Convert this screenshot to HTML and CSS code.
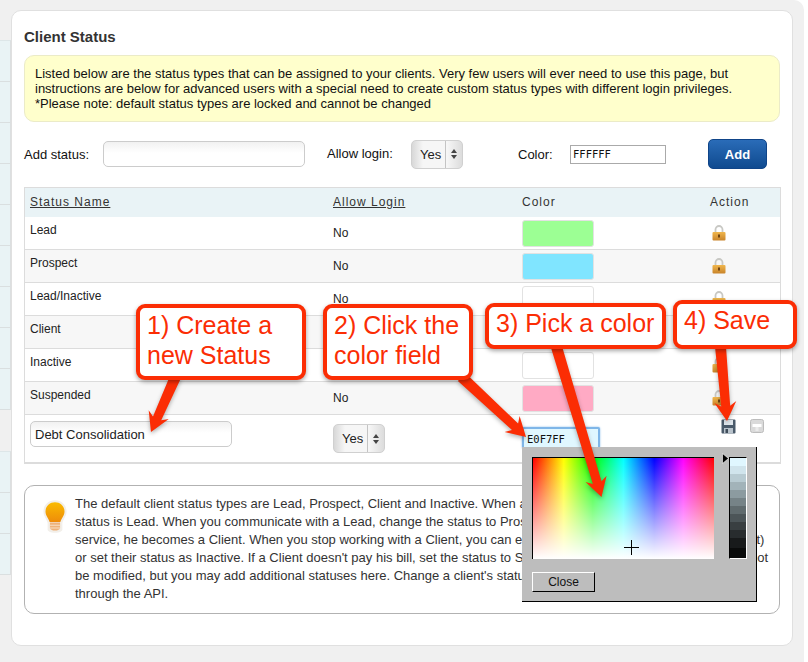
FILE: index.html
```html
<!DOCTYPE html>
<html lang="en">
<head>
<meta charset="utf-8">
<title>Client Status</title>
<link rel="stylesheet" href="styles.css">
</head>
<body>
<div class="shell">
  <aside class="side">
    <div class="side-group">
      <div class="side-row"></div><div class="side-row"></div><div class="side-row"></div>
      <div class="side-row"></div><div class="side-row"></div><div class="side-row"></div>
      <div class="side-row"></div><div class="side-row"></div><div class="side-row"></div>
    </div>
    <div class="side-group side-second">
      <div class="side-row"></div><div class="side-row"></div><div class="side-row"></div>
    </div>
  </aside>

  <main class="panel">
    <h1 class="title">Client Status</h1>
    <div class="note">Listed below are the status types that can be assigned to your clients. Very few users will ever need to use this page, but<br>instructions are below for advanced users with a special need to create custom status types with different login privileges.<br>*Please note: default status types are locked and cannot be changed</div>

    <form class="add-row">
      <label class="lbl lbl-status">Add status:</label>
      <input class="field field-status" type="text">
      <label class="lbl lbl-login">Allow login:</label>
      <div class="sel sel-top"><span class="sel-val">Yes</span><span class="sel-arrows"><i class="up"></i><i class="down"></i></span></div>
      <label class="lbl lbl-color">Color:</label>
      <input class="hex" type="text" value="FFFFFF">
      <button class="add" type="button">Add</button>
    </form>

    <table class="grid">
      <colgroup><col class="c1"><col class="c2"><col class="c3"><col class="c4"></colgroup>
      <thead>
        <tr><th><u>Status Name</u></th><th><u>Allow Login</u></th><th>Color</th><th>Action</th></tr>
      </thead>
      <tbody>
        <tr>
          <td class="name">Lead</td><td class="login">No</td>
          <td class="col"><div class="swatch sw-green"></div></td>
          <td class="act"><svg class="lock" viewBox="0 0 14 16"><use href="#lock"/></svg></td>
        </tr>
        <tr class="alt">
          <td class="name">Prospect</td><td class="login">No</td>
          <td class="col"><div class="swatch sw-blue"></div></td>
          <td class="act"><svg class="lock" viewBox="0 0 14 16"><use href="#lock"/></svg></td>
        </tr>
        <tr>
          <td class="name">Lead/Inactive</td><td class="login">No</td>
          <td class="col"><div class="swatch"></div></td>
          <td class="act"><svg class="lock" viewBox="0 0 14 16"><use href="#lock"/></svg></td>
        </tr>
        <tr class="alt">
          <td class="name">Client</td><td class="login">No</td>
          <td class="col"><div class="swatch"></div></td>
          <td class="act"><svg class="lock" viewBox="0 0 14 16"><use href="#lock"/></svg></td>
        </tr>
        <tr>
          <td class="name">Inactive</td><td class="login">No</td>
          <td class="col"><div class="swatch"></div></td>
          <td class="act"><svg class="lock" viewBox="0 0 14 16"><use href="#lock"/></svg></td>
        </tr>
        <tr class="alt">
          <td class="name">Suspended</td><td class="login">No</td>
          <td class="col"><div class="swatch sw-pink"></div></td>
          <td class="act"><svg class="lock" viewBox="0 0 14 16"><use href="#lock"/></svg></td>
        </tr>
        <tr class="edit">
          <td class="name-edit"><input class="field field-name" type="text" value="Debt Consolidation"></td>
          <td class="login-edit"><div class="sel"><span class="sel-val">Yes</span><span class="sel-arrows"><i class="up"></i><i class="down"></i></span></div></td>
          <td class="col-edit"><input class="hex-edit" type="text" value="E0F7FF"></td>
          <td class="act-edit">
            <svg class="save" viewBox="0 0 15 15">
              <path d="M0.5 1.5a1 1 0 0 1 1-1h12a1 1 0 0 1 1 1v12a1 1 0 0 1-1 1h-12a1 1 0 0 1-1-1z" fill="#4a5a6a"/>
              <rect x="3" y="1" width="9" height="5" fill="#dfe6ec"/>
              <rect x="3" y="9" width="9" height="5.5" fill="#b9c3cc"/>
              <rect x="4.5" y="10" width="2.5" height="4" fill="#3f4d5a"/>
            </svg>
            <svg class="minus" viewBox="0 0 14 14">
              <rect x="0.5" y="0.5" width="13" height="13" rx="2" fill="#dadada" stroke="#bcbcbc"/>
              <rect x="2.5" y="5" width="9" height="3" fill="#fff"/>
              <rect x="5.5" y="8" width="3" height="4" fill="#ebebeb"/>
            </svg>
          </td>
        </tr>
      </tbody>
    </table>

    <section class="help">
      <svg class="bulb" viewBox="0 0 26 36">
        <defs>
          <linearGradient id="bulbfill" x1="0" y1="0" x2="0" y2="1">
            <stop offset="0" stop-color="#fabb00"/><stop offset="1" stop-color="#ee8c0a"/>
          </linearGradient>
        </defs>
        <path d="M13 0.5C5.800 0.500 0.500 5.800 0.500 12.500c0 5 3.500 8 4.500 12.500v7c0 2 3 3.500 8 3.500s8-1.500 8-3.500v-7c1-4.500 4.500-7.500 4.500-12.500C25.500 5.800 20.200 0.500 13 0.500z" fill="#f2efea"/>
        <path d="M13 2.500C7 2.500 2.700 7 2.700 12.500c0 4.500 3.500 7.500 4.500 11.500h11.600c1-4 4.500-7 4.500-11.500C23.300 7 19 2.500 13 2.500z" fill="url(#bulbfill)"/>
        <path d="M7.500 24.500h11v6c0 1.500-2.500 2.800-5.500 2.800s-5.500-1.300-5.500-2.800z" fill="#eeb27a"/>
        <path d="M7.500 27h11v1H7.500zM7.500 30h11v1H7.500z" fill="#f8dfc4"/>
      </svg>
      <p class="help-text">The default client status types are Lead, Prospect, Client and Inactive. When a new client signs up, their default<br>status is Lead. When you communicate with a Lead, change the status to Prospect. When a Prospect pays for a<br>service, he becomes a Client. When you stop working with a Client, you can either delete them (or mark them as a Lost)<br>or set their status as Inactive. If a Client doesn't pay his bill, set the status to Suspended. These default statuses may not<br>be modified, but you may add additional statuses here. Change a client's status on their profile page or<br>through the API.</p>
    </section>
  </main>

  <div class="picker">
    <div class="spectrum"><svg class="cross" viewBox="0 0 15 15"><path d="M7.500 0v15M0 7.500h15" stroke="#000" fill="none"/></svg></div>
    <div class="slider"></div>
    <svg class="pointer" viewBox="0 0 7 11"><path d="M0.500 0.500L6.500 5.500L0.500 10.500z" fill="#000" stroke="#fff" stroke-width="0.600"/></svg>
    <button class="close" type="button">Close</button>
  </div>

  <svg class="arrows" viewBox="0 0 808 662">
    <g transform="translate(151 432) rotate(114)"><polygon points="0,0 -19,-11 -15,-4.500 -62,-5.500 -62,5.500 -15,4.500 -19,11"/></g>
    <g transform="translate(526 437) rotate(43)"><polygon points="0,0 -19,-11 -15,-4.500 -88,-5.500 -88,5.500 -15,4.500 -19,11"/></g>
    <g transform="translate(601.500 497) rotate(73.300)"><polygon points="0,0 -19,-11 -15,-4.500 -158,-5.500 -158,5.500 -15,4.500 -19,11"/></g>
    <g transform="translate(727 421) rotate(85)"><polygon points="0,0 -19,-11 -15,-4.500 -76,-5.500 -76,5.500 -15,4.500 -19,11"/></g>
  </svg>

  <div class="callout call-1">1) Create a<br>new Status</div>
  <div class="callout call-2">2) Click the<br>color field</div>
  <div class="callout call-3">3) Pick a color</div>
  <div class="callout call-4">4) Save</div>
</div>

<svg class="defs" width="0" height="0">
  <defs>
    <linearGradient id="lockfill" x1="0" y1="0" x2="0" y2="1">
      <stop offset="0" stop-color="#f0b64c"/><stop offset="1" stop-color="#c9842a"/>
    </linearGradient>
    <g id="lock">
      <path d="M3.500 7V4.500a3.500 3.500 0 0 1 7 0V7" fill="none" stroke="#c8c8c4" stroke-width="1.800"/>
      <rect x="0.500" y="7" width="13" height="8.500" rx="1" fill="url(#lockfill)"/>
      <rect x="6" y="9.500" width="2" height="3" fill="#6e4312"/>
    </g>
  </defs>
</svg>
</body>
</html>
```

FILE: styles.css
```css
* { box-sizing: border-box; }

html, body {
  margin: 0;
  height: 662px;
  overflow: hidden;
  background: #fff;
}

body {
  font-family: "Liberation Sans", Arial, sans-serif;
  font-size: 12px;
  color: #222;
}

.shell {
  position: relative;
  display: flex;
  align-items: flex-start;
  width: 804px;
  height: 662px;
  padding-top: 10px;
  background: #f0f0f0;
  border-top-right-radius: 10px;
}

/* sidebar slivers */
.side { width: 11px; padding-top: 30px; flex: none; }
.side-group { border-top: 1px solid #dde6e8; border-right: 1px solid #dcdfe0; }
.side-second { margin-top: 41px; }
.side-row { height: 41px; background: #e9f3f5; border-bottom: 1px solid #dadfe0; }

/* main panel */
.panel {
  width: 782px;
  height: 636px;
  padding: 0 12px;
  background: #fff;
  border: 1px solid #e0e0e0;
  border-radius: 10px;
}

.title {
  margin: 18px 0 10px;
  font-size: 15px;
  line-height: 16px;
  font-weight: bold;
  color: #333;
}

.note {
  height: 67px;
  padding: 10px;
  font-size: 13px;
  line-height: 15px;
  white-space: nowrap;
  color: #111;
  background: #ffffcc;
  border: 1px solid #ebebc8;
  border-radius: 10px;
}

/* add form */
.add-row {
  display: flex;
  align-items: center;
  height: 30px;
  margin-top: 17px;
}
.lbl { font-size: 13px; color: #111; white-space: nowrap; }
.lbl-status { width: 79px; }
.lbl-login { width: 84px; margin: -2px 0 0 22px; }
.lbl-color { width: 52px; margin-left: 55px; }

.field {
  height: 26px;
  padding: 0 4px;
  font: 13px "Liberation Sans", Arial, sans-serif;
  color: #222;
  background: linear-gradient(#f1f1f1, #fff 45%);
  border: 1px solid #ccc;
  border-radius: 5px;
  outline: none;
}
.field-status { width: 202px; }
.field-name { display: block; width: 202px; }

.sel {
  display: flex;
  align-items: center;
  width: 52px;
  height: 29px;
  background: linear-gradient(90deg, #d8d8d8, #f6f6f6 22%, #f6f6f6 70%, #dcdcdc);
  border: 1px solid #d0d0d0;
  border-radius: 5px;
}
.sel-val { width: 33px; padding-left: 8px; font-size: 13px; color: #222; }
.sel-arrows {
  display: flex;
  flex-direction: column;
  align-items: center;
  justify-content: center;
  gap: 2px;
  align-self: stretch;
  flex: 1;
  border-left: 1px solid #c4c4c4;
}
.sel-arrows i { display: block; width: 0; height: 0; border-left: 3px solid transparent; border-right: 3px solid transparent; }
.sel-arrows .up { border-bottom: 4px solid #444; }
.sel-arrows .down { border-top: 4px solid #444; }

.hex {
  width: 96px;
  height: 19px;
  margin-right: 42px;
  padding: 0 2px;
  font: 10.5px "DejaVu Sans Mono", monospace;
  color: #111;
  background: #fff;
  border: 1px solid #aaa;
  outline: none;
}
.add {
  width: 59px;
  height: 30px;
  padding: 0;
  font: bold 13px "Liberation Sans", Arial, sans-serif;
  color: #fff;
  background: linear-gradient(#2a6cb8, #0f4a8f);
  border: 1px solid #0f4488;
  border-radius: 5px;
}

/* status table */
.grid {
  display: table;
  width: 757px;
  height: 276px;
  margin-top: 18px;
  border-collapse: separate;
  border-spacing: 0;
  table-layout: fixed;
  border: 1px solid #dcdcdc;
  border-bottom-width: 2px;
}
.c1 { width: 303px; }
.c2 { width: 188px; }
.c3 { width: 188px; }
.c4 { width: 76px; }

.grid th {
  height: 29px;
  padding: 0 5px 2px;
  font-size: 12px;
  font-weight: normal;
  letter-spacing: 1px;
  text-align: left;
  color: #333;
  background: #e9f3f6;
}
.grid th:nth-child(3) { padding-left: 6px; }
.grid th:nth-child(4) { padding-left: 6px; }
.grid tbody td {
  height: 33px;
  padding: 0 5px;
  vertical-align: top;
  line-height: 15px;
  color: #222;
  border-bottom: 1px solid #dcdcdc;
}
.grid tbody tr.alt td { background: #f7f7f7; }
.grid tbody tr.edit td { height: 47px; border-bottom: 0; }

.grid td.name { padding-top: 6px; }
.grid td.login { padding-top: 9px; }
.grid td.col { padding: 3px 0 0 6px; }
.grid td.act { padding: 8px 0 0 8px; }
.grid td.name-edit { padding: 6px 0 0 5px; }
.grid td.login-edit { padding: 9px 0 0 5px; }
.grid td.col-edit { padding: 12px 0 0 6px; }
.grid td.act-edit { padding: 4px 0 0 17px; }

.swatch {
  width: 72px;
  height: 27px;
  background: #fff;
  border: 1px solid #e2e2e2;
  border-radius: 3px;
}
.sw-green { background: #9cff94; }
.sw-blue { background: #80e5ff; }
.sw-pink { background: #ffaac4; }

.lock { display: block; width: 14px; height: 16px; }
.save { display: inline-block; width: 15px; height: 15px; margin-right: 11px; vertical-align: top; }
.minus { display: inline-block; width: 14px; height: 14px; vertical-align: top; }

.hex-edit {
  display: block;
  width: 78px;
  height: 22px;
  padding: 2px 2px 0 3px;
  font: 10.5px "DejaVu Sans Mono", monospace;
  color: #111;
  background: #e0f7ff;
  border: 2px solid #7fb6e8;
  border-radius: 2px;
  outline: none;
  box-shadow: 0 0 2px #7fb6e8;
}

/* help box */
.help {
  display: flex;
  gap: 8px;
  height: 129px;
  margin-top: 21px;
  padding: 9px 0 0 18px;
  border: 1px solid #b2b2b2;
  border-radius: 10px;
}
.bulb { width: 24px; height: 35px; margin-top: 4px; flex: none; }
.help-text {
  margin: 0;
  font-size: 13px;
  line-height: 18px;
  white-space: nowrap;
  color: #333;
}

/* colour picker popover */
.picker {
  position: absolute;
  left: 522px;
  top: 447px;
  width: 235px;
  height: 155px;
  background: #bdbdbd;
  border-right: 1px solid #000;
  border-bottom: 1px solid #000;
}
.spectrum {
  position: absolute;
  left: 10px;
  top: 10px;
  width: 182px;
  height: 102px;
  background:
    linear-gradient(rgba(255,255,255,0), #fff),
    linear-gradient(90deg, #f00, #ff0 17%, #0f0 33%, #0ff 50%, #00f 67%, #f0f 83%, #f00);
  border-top: 1px solid #000;
  border-left: 1px solid #000;
}
.cross { position: absolute; left: 91px; top: 82px; width: 15px; height: 15px; }
.slider {
  position: absolute;
  left: 207px;
  top: 10px;
  width: 18px;
  height: 102px;
  background: linear-gradient(#e0f7ff 0 8%, #d0e4ec 8% 16%, #b8cbd2 16% 24%, #a2b3b9 24% 32%, #8c9ba0 32% 40%, #768387 40% 48%, #606b6e 48% 56%, #4c5558 56% 64%, #393f41 64% 72%, #282c2e 72% 80%, #181a1b 80% 90%, #0a0b0b 90%);
  border-top: 1px solid #000;
  border-left: 1px solid #000;
  border-right: 1px solid #fff;
  border-bottom: 1px solid #fff;
}
.pointer { position: absolute; left: 200px; top: 6px; width: 7px; height: 11px; }
.close {
  position: absolute;
  left: 10px;
  top: 125px;
  width: 63px;
  height: 20px;
  padding: 0;
  font: 12px "Liberation Sans", Arial, sans-serif;
  color: #111;
  background: #bdbdbd;
  border: 1px solid;
  border-color: #fff #000 #000 #fff;
}

/* annotations */
.arrows {
  position: absolute;
  left: 0;
  top: 0;
  width: 808px;
  height: 662px;
  fill: #fb2d04;
  filter: drop-shadow(0 2px 2px rgba(0,0,0,.3));
}
.callout {
  position: absolute;
  padding: 2px 7px;
  font-size: 25px;
  line-height: 30px;
  white-space: nowrap;
  color: #fb2d04;
  background: #fff;
  border: 4px solid #fb2d04;
  border-radius: 9px;
  box-shadow: 0 2px 4px rgba(0,0,0,.35);
}
.call-1 { left: 136px; top: 304px; width: 170px; height: 76px; }
.call-2 { left: 323px; top: 304px; width: 150px; height: 76px; }
.call-3 { left: 485px; top: 303px; width: 181px; height: 46px; padding-top: 1px; }
.call-4 { left: 673px; top: 300px; width: 124px; height: 49px; padding-top: 1px; }

.defs { position: absolute; }
```
